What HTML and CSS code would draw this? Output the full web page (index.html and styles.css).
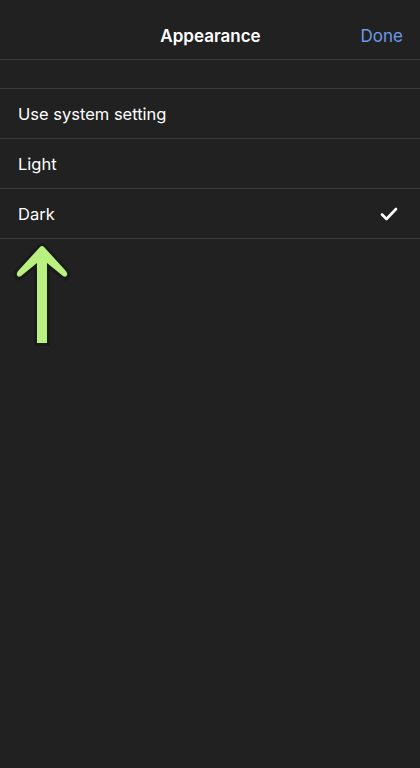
FILE: index.html
```html
<!DOCTYPE html>
<html lang="en">
<head>
  <meta charset="UTF-8" />
  <title>Appearance</title>
  <link rel="stylesheet" href="styles.css">
</head>
<body>

  <header class="navbar">
    <span class="nav-side"></span>
    <h1>Appearance</h1>
    <a class="nav-side done" href="#">Done</a>
  </header>

  <div class="spacer"></div>

  <ul class="options">
    <li>Use system setting</li>
    <li>Light</li>
    <li class="selected">
      Dark
      <svg class="check" width="18" height="14" viewBox="0 0 18 14">
        <path d="M2 7.5 L6.5 12 L16 2" fill="none" stroke="#fff" stroke-width="2.6" stroke-linecap="round" stroke-linejoin="round"/>
      </svg>
    </li>
  </ul>

  <div class="pointer">
    <svg width="60" height="110" viewBox="0 0 60 110">
      <path d="M22 107 L22 30 L10 40 Q4 44 2 38 Q0 34 6 28 L26 6 Q30 2 34 6 L54 28 Q60 34 58 38 Q56 44 50 40 L38 30 L38 107 Z" fill="#1a1a1a"/>
      <path d="M25 104 L25 24 L9 37 Q6 39 5 36 Q4 34 7 31 L28 8 Q30 6 32 8 L53 31 Q56 34 55 36 Q54 39 51 37 L35 24 L35 104 Z" fill="#b9f07f"/>
    </svg>
  </div>

</body>
</html>
```

FILE: styles.css
```css
body {
  margin: 0;
  background: #212121;
  color: #fff;
  font-family: Inter, 'Noto Sans', sans-serif;
  height: 768px;
  overflow: hidden;
}

.navbar {
  display: flex;
  align-items: center;
  justify-content: space-between;
  height: 59px;
  padding: 0 17px 0 18px;
  border-bottom: 1px solid #3a3a3a;
  box-sizing: content-box;
}

.navbar h1 {
  margin: 0;
  font-size: 17px;
  font-weight: 600;
  padding-top: 22px;
  padding-bottom: 10px;
}

.nav-side {
  width: 60px;
}

.done {
  color: #6c9ae6;
  text-decoration: none;
  font-size: 17px;
  text-align: right;
  padding-top: 22px;
  padding-bottom: 10px;
}

.spacer {
  height: 28px;
  border-bottom: 1px solid #3a3a3a;
}

.options {
  list-style: none;
  margin: 0;
  padding: 0;
}

.options li {
  display: flex;
  align-items: center;
  justify-content: space-between;
  height: 49px;
  padding: 0 22px 0 18px;
  font-size: 16.5px;
  border-bottom: 1px solid #3a3a3a;
}

.check {
  margin-top: 1px;
}

.pointer {
  padding-left: 12px;
  margin-top: 0;
}

.pointer svg {
  display: block;
}
```
